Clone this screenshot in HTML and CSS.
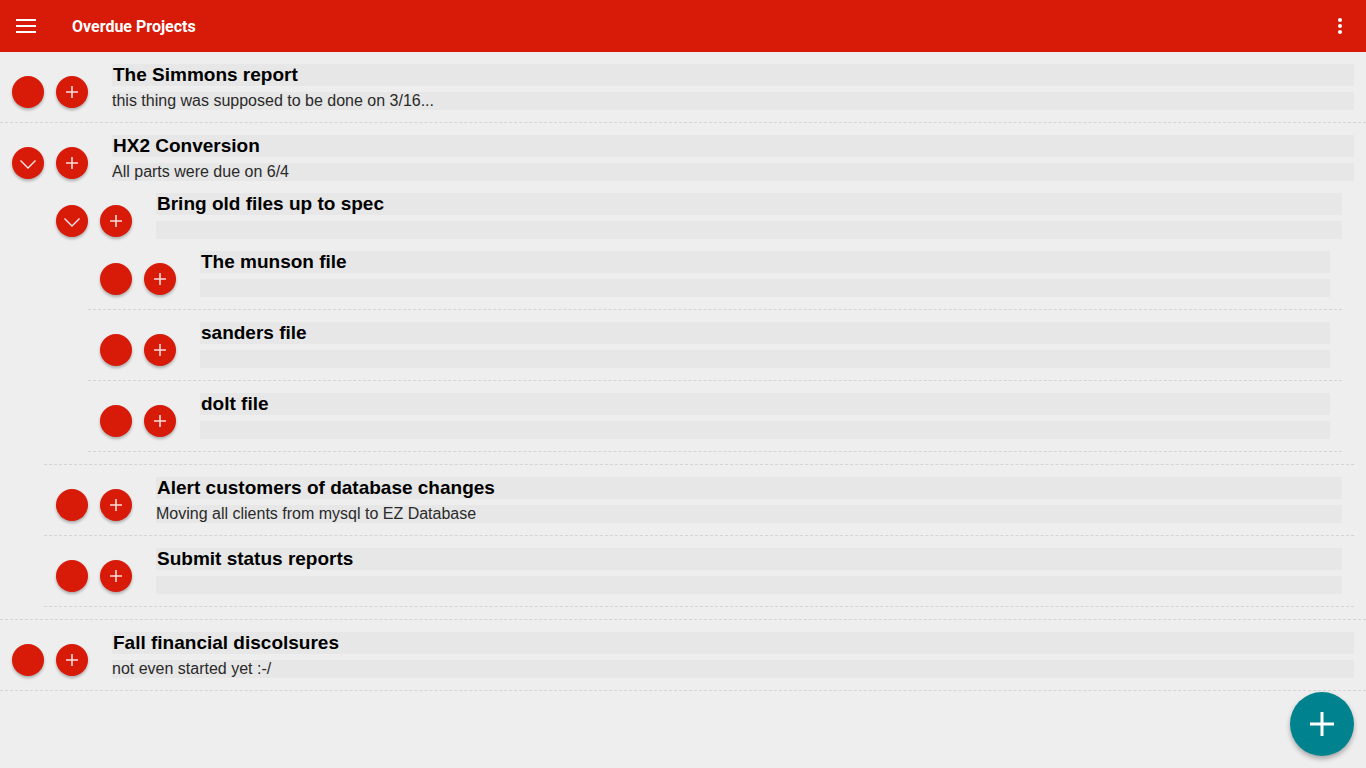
FILE: index.html
```html
<!DOCTYPE html>
<html lang="en">
<head>
<meta charset="utf-8">
<title>Overdue Projects</title>
<link rel="stylesheet" href="styles.css">
</head>
<body>
<header class="appbar">
  <button class="icon-btn menu" aria-label="Menu">
    <svg width="20" height="14" viewBox="0 0 20 14"><rect x="0" y="0" width="20" height="2" fill="#fff"/><rect x="0" y="6" width="20" height="2" fill="#fff"/><rect x="0" y="12" width="20" height="2" fill="#fff"/></svg>
  </button>
  <h1 class="appbar-title">Overdue Projects</h1>
  <button class="icon-btn more" aria-label="More">
    <svg width="4" height="16" viewBox="0 0 4 16"><circle cx="2" cy="2" r="2" fill="#fff"/><circle cx="2" cy="8" r="2" fill="#fff"/><circle cx="2" cy="14" r="2" fill="#fff"/></svg>
  </button>
</header>

<main class="list">
  <div class="item top">
    <div class="item-head">
      <div class="actions"><button class="dot"></button><button class="dot"><svg class="plus" width="12" height="12" viewBox="0 0 12 12"><path d="M6 0V12M0 6H12"/></svg></button></div>
      <div class="fields"><div class="f-title">The Simmons report</div><div class="f-desc">this thing was supposed to be done on 3/16...</div></div>
    </div>
  </div>

  <div class="item top">
    <div class="item-head">
      <div class="actions"><button class="dot"><svg class="chev" width="16" height="9" viewBox="0 0 16 9"><path d="M0.5 0.5L8 8L15.5 0.5"/></svg></button><button class="dot"><svg class="plus" width="12" height="12" viewBox="0 0 12 12"><path d="M6 0V12M0 6H12"/></svg></button></div>
      <div class="fields"><div class="f-title">HX2 Conversion</div><div class="f-desc">All parts were due on 6/4</div></div>
    </div>
    <div class="children">
      <div class="item">
        <div class="item-head">
          <div class="actions"><button class="dot"><svg class="chev" width="16" height="9" viewBox="0 0 16 9"><path d="M0.5 0.5L8 8L15.5 0.5"/></svg></button><button class="dot"><svg class="plus" width="12" height="12" viewBox="0 0 12 12"><path d="M6 0V12M0 6H12"/></svg></button></div>
          <div class="fields"><div class="f-title">Bring old files up to spec</div><div class="f-desc"></div></div>
        </div>
        <div class="children">
          <div class="item">
            <div class="item-head">
              <div class="actions"><button class="dot"></button><button class="dot"><svg class="plus" width="12" height="12" viewBox="0 0 12 12"><path d="M6 0V12M0 6H12"/></svg></button></div>
              <div class="fields"><div class="f-title">The munson file</div><div class="f-desc"></div></div>
            </div>
          </div>
          <div class="item">
            <div class="item-head">
              <div class="actions"><button class="dot"></button><button class="dot"><svg class="plus" width="12" height="12" viewBox="0 0 12 12"><path d="M6 0V12M0 6H12"/></svg></button></div>
              <div class="fields"><div class="f-title">sanders file</div><div class="f-desc"></div></div>
            </div>
          </div>
          <div class="item">
            <div class="item-head">
              <div class="actions"><button class="dot"></button><button class="dot"><svg class="plus" width="12" height="12" viewBox="0 0 12 12"><path d="M6 0V12M0 6H12"/></svg></button></div>
              <div class="fields"><div class="f-title">dolt file</div><div class="f-desc"></div></div>
            </div>
          </div>
        </div>
      </div>
      <div class="item">
        <div class="item-head">
          <div class="actions"><button class="dot"></button><button class="dot"><svg class="plus" width="12" height="12" viewBox="0 0 12 12"><path d="M6 0V12M0 6H12"/></svg></button></div>
          <div class="fields"><div class="f-title">Alert customers of database changes</div><div class="f-desc">Moving all clients from mysql to EZ Database</div></div>
        </div>
      </div>
      <div class="item">
        <div class="item-head">
          <div class="actions"><button class="dot"></button><button class="dot"><svg class="plus" width="12" height="12" viewBox="0 0 12 12"><path d="M6 0V12M0 6H12"/></svg></button></div>
          <div class="fields"><div class="f-title">Submit status reports</div><div class="f-desc"></div></div>
        </div>
      </div>
    </div>
  </div>

  <div class="item top">
    <div class="item-head">
      <div class="actions"><button class="dot"></button><button class="dot"><svg class="plus" width="12" height="12" viewBox="0 0 12 12"><path d="M6 0V12M0 6H12"/></svg></button></div>
      <div class="fields"><div class="f-title">Fall financial discolsures</div><div class="f-desc">not even started yet :-/</div></div>
    </div>
  </div>
</main>

<button class="fab" aria-label="Add project">
  <svg width="24" height="24" viewBox="0 0 24 24"><path d="M12 0V24M0 12H24" stroke="#fff" stroke-width="3"/></svg>
</button>
</body>
</html>
```

FILE: styles.css
```css
* { box-sizing: border-box; }

html, body {
  margin: 0;
  padding: 0;
}

body {
  background: #eeeeee;
  font-family: "Liberation Sans", Arial, sans-serif;
  color: #000;
  min-height: 768px;
}

button {
  border: 0;
  padding: 0;
  margin: 0;
  background: none;
  cursor: pointer;
}

.appbar {
  height: 52px;
  background: #d81a09;
  display: flex;
  align-items: center;
  padding: 0 16px;
}

.icon-btn {
  display: flex;
  align-items: center;
  justify-content: center;
}

.menu {
  width: 20px;
  height: 14px;
}

.appbar-title {
  margin: 0 0 0 36px;
  flex: 1;
  font-family: Roboto, "Noto Sans", sans-serif;
  font-weight: 700;
  font-size: 16px;
  color: #fff;
}

.more {
  width: 4px;
  height: 16px;
  margin-right: 8px;
}

.list {
  display: flex;
  flex-direction: column;
}

.item {
  padding: 12px;
  border-bottom: 1px dashed #d4d4d4;
}

.item-head {
  display: flex;
  align-items: flex-start;
}

.actions {
  display: flex;
  gap: 12px;
  margin-top: 12px;
  margin-right: 24px;
  flex: none;
}

.dot {
  width: 32px;
  height: 32px;
  border-radius: 50%;
  background: #d81a09;
  box-shadow: 0 2px 3px rgba(0, 0, 0, 0.28);
  display: flex;
  align-items: center;
  justify-content: center;
}

.plus path {
  stroke: rgba(255, 255, 255, 0.85);
  stroke-width: 1.6;
  fill: none;
}

.chev {
  margin-top: 2px;
}

.chev path {
  stroke: rgba(255, 255, 255, 0.9);
  stroke-width: 1.4;
  fill: none;
}

.fields {
  flex: 1;
  display: flex;
  flex-direction: column;
  gap: 6px;
  min-width: 0;
}

.f-title {
  height: 22px;
  line-height: 22px;
  background: #e7e7e7;
  font-size: 19px;
  font-weight: 700;
  padding-left: 1px;
  color: #000;
  white-space: nowrap;
}

.f-desc {
  height: 18px;
  line-height: 18px;
  background: #e7e7e7;
  font-size: 16px;
  color: #2a2a2a;
  white-space: nowrap;
}

.children {
  margin-left: 32px;
  display: flex;
  flex-direction: column;
}

.fab {
  position: fixed;
  right: 12px;
  bottom: 12px;
  width: 64px;
  height: 64px;
  border-radius: 50%;
  background: #00838f;
  box-shadow: 0 3px 5px rgba(0, 0, 0, 0.3);
  display: flex;
  align-items: center;
  justify-content: center;
}
```
